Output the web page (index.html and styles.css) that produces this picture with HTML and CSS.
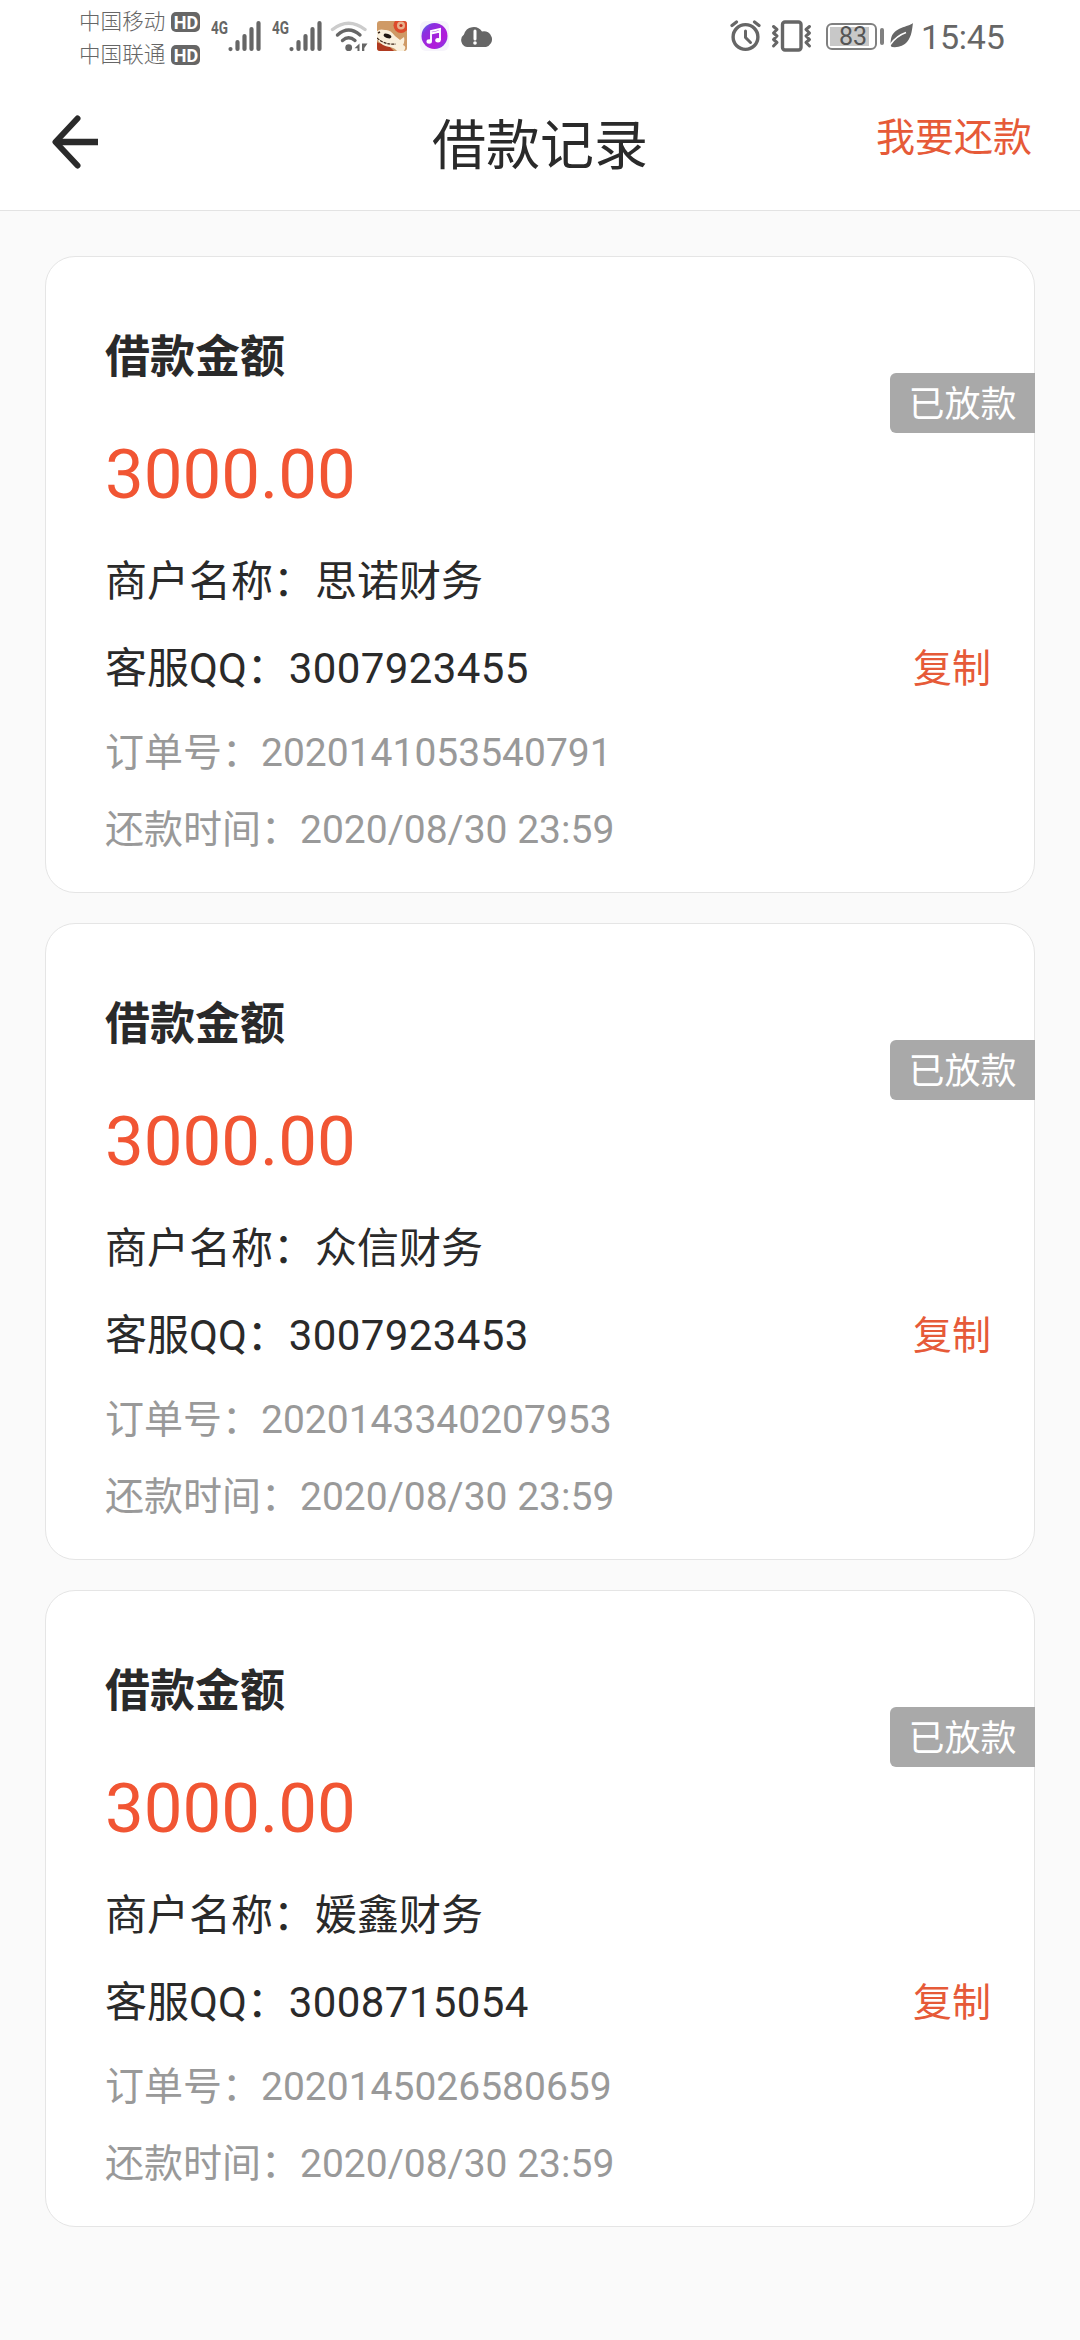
FILE: index.html
```html
<!DOCTYPE html>
<html lang="zh-CN">
<head>
    <meta charset="UTF-8">
    <meta name="viewport" content="width=device-width, initial-scale=1.0">
    <title>借款记录</title>
    <link rel="stylesheet" href="styles.css">
</head>
<body>
    <!-- Status bar -->
    <div class="status-bar">
        <div class="carriers">
            <div class="carrier">中国移动<span class="hd">HD</span></div>
            <div class="carrier">中国联通<span class="hd">HD</span></div>
        </div>
        <svg class="signal" width="50" height="36" viewBox="0 0 50 36">
            <text class="net" x="0" y="16" textLength="17" lengthAdjust="spacingAndGlyphs">4G</text>
            <path d="M19.5 31v0.1M26.5 24v7M33.5 18v13M40.5 11v20M47.5 5v26" stroke="#666" stroke-width="4.2" stroke-linecap="round"/>
        </svg>
        <svg class="signal" width="50" height="36" viewBox="0 0 50 36">
            <text class="net" x="0" y="16" textLength="17" lengthAdjust="spacingAndGlyphs">4G</text>
            <path d="M19.5 31v0.1M26.5 24v7M33.5 18v13M40.5 11v20M47.5 5v26" stroke="#666" stroke-width="4.2" stroke-linecap="round"/>
        </svg>
        <svg class="wifi" width="38" height="36" viewBox="0 0 38 36">
            <g fill="none" stroke-linecap="round" stroke-width="3.4">
                <path d="M2.5 11.5Q18.5 -1 35 11.5" stroke="#ccc"/>
                <path d="M7.5 17Q18.5 7 30 17" stroke="#666"/>
                <path d="M12.5 22.5Q18.5 17 25 22.5" stroke="#666"/>
            </g>
            <circle cx="18.7" cy="29.7" r="3.4" fill="#666"/>
            <path d="M29.5 25.5v7.5h-2v-2.8h-3l5-4.7zM32 33v-7.5h5.5l-3.200 4.500v3z" fill="#666"/>
        </svg>
        <svg class="app" width="32" height="36" viewBox="0 0 32 36">
            <defs><clipPath id="app-clip"><rect x="1" y="3" width="30" height="30" rx="3"/></clipPath></defs>
            <g clip-path="url(#app-clip)">
                <rect width="32" height="36" fill="#cf9a66"/>
                <path d="M0 35V24l14 5 6 6z" fill="#b03a20"/>
                <circle cx="25" cy="7.5" r="7.5" fill="#dd4a2c"/>
                <circle cx="25" cy="7.5" r="4" fill="#e7b08c"/>
                <circle cx="25" cy="7.5" r="1.6" fill="#c9301c"/>
                <path d="M0 15Q2 10 9 12Q14 11 19 18L24 22L28 19Q29 24 27 27Q31 28 28 33H21Q19 30 14 29Q5 28 0 20z" fill="#f9efdc"/>
                <path d="M1 20Q8 27 20 26" fill="none" stroke="#3a2417" stroke-width="1.2" stroke-dasharray="3 1"/>
                <ellipse cx="11.5" cy="18" rx="4" ry="2" fill="#1f1712" transform="rotate(18 11.5 18)"/>
                <path d="M2 15l2-1" stroke="#3a2417" stroke-width="1.4"/>
            </g>
        </svg>
        <svg class="music" width="30" height="36" viewBox="0 0 30 36">
            <defs>
                <linearGradient id="music-fill" x1="0" y1="0" x2="1" y2="1">
                    <stop offset="0" stop-color="#3b8ff0"/>
                    <stop offset="0.25" stop-color="#8b2fe0"/>
                    <stop offset="0.7" stop-color="#b31bd9"/>
                    <stop offset="1" stop-color="#6a4bea"/>
                </linearGradient>
            </defs>
            <rect x="0" y="3" width="29" height="30" rx="6" fill="#f6f4fb"/>
            <circle cx="14.5" cy="18" r="13" fill="url(#music-fill)"/>
            <path d="M11 23.5V13l9-2v11M11 15.5l9-2" fill="none" stroke="#fff" stroke-width="1.9"/>
            <ellipse cx="9.2" cy="23.5" rx="2.7" ry="2.2" fill="#fff"/>
            <ellipse cx="18" cy="22.3" rx="2.7" ry="2.2" fill="#fff"/>
        </svg>
        <svg class="cloud" width="32" height="36" viewBox="0 0 32 36">
            <path d="M7 29A7 7 0 0 1 4 16.5A10 10 0 0 1 22 13.5A8 8 0 0 1 26 29z" fill="#666"/>
            <path d="M15 13v8" stroke="#fff" stroke-width="3" stroke-linecap="round"/>
            <circle cx="15" cy="25" r="1.8" fill="#fff"/>
        </svg>
        <div class="status-right">
            <svg width="32" height="36" viewBox="0 0 32 36">
                <circle cx="15.5" cy="19" r="12.4" fill="none" stroke="#666" stroke-width="3.4"/>
                <path d="M15.5 13v6.5l5 5" fill="none" stroke="#666" stroke-width="3" stroke-linecap="round" stroke-linejoin="round"/>
                <path d="M2 7.5l4.5-3.5M29 7.5l-4.5-3.5" stroke="#666" stroke-width="3.2" stroke-linecap="round"/>
            </svg>
            <svg class="vibrate" width="42" height="36" viewBox="0 0 42 36">
                <rect x="11.5" y="4" width="18.5" height="28" rx="2.5" fill="none" stroke="#666" stroke-width="3.4"/>
                <path d="M2.5 8.5l3.5 3-3.5 3.5 3.5 3-3.5 3.5 3.5 3-3.5 3.5M38.5 8.5l-3.5 3 3.5 3.5-3.5 3 3.5 3.5-3.5 3 3.5 3.5" fill="none" stroke="#666" stroke-width="3" stroke-linecap="round" stroke-linejoin="round"/>
            </svg>
            <div class="battery"><span>83</span></div>
            <div class="battery-tip"></div>
            <svg class="leaf" width="24" height="36" viewBox="0 0 24 36">
                <path d="M23 5C19 9 3 9 1 21C0 26 1 29 2 29Q12 30 17 24C22 18 22 11 23 5z" fill="#666"/>
                <path d="M0 27Q6 18 16 14.5" fill="none" stroke="#fff" stroke-width="1.5"/>
            </svg>
            <span class="clock">15:45</span>
        </div>
    </div>

    <!-- Title bar -->
    <div class="nav">
        <svg class="back" width="50" height="56" viewBox="0 0 50 56">
            <path d="M26.5 4.500L4.500 28L26.500 51.500" fill="none" stroke="#2a2a2a" stroke-width="6" stroke-linecap="round" stroke-linejoin="round"/>
            <path d="M5 28H47" stroke="#2a2a2a" stroke-width="6.5"/>
        </svg>
        <h1>借款记录</h1>
        <a class="repay">我要还款</a>
    </div>

    <!-- Loan records -->
    <div class="list">
        <div class="card">
            <span class="badge">已放款</span>
            <h2>借款金额</h2>
            <div class="amount">3000.00</div>
            <div class="row name">商户名称：思诺财务</div>
            <div class="row qq"><span>客服QQ：<span class="num">3007923455</span></span><a class="copy">复制</a></div>
            <div class="info order">订单号：2020141053540791</div>
            <div class="info time">还款时间：2020/08/30 23:59</div>
        </div>
        <div class="card">
            <span class="badge">已放款</span>
            <h2>借款金额</h2>
            <div class="amount">3000.00</div>
            <div class="row name">商户名称：众信财务</div>
            <div class="row qq"><span>客服QQ：<span class="num">3007923453</span></span><a class="copy">复制</a></div>
            <div class="info order">订单号：2020143340207953</div>
            <div class="info time">还款时间：2020/08/30 23:59</div>
        </div>
        <div class="card">
            <span class="badge">已放款</span>
            <h2>借款金额</h2>
            <div class="amount">3000.00</div>
            <div class="row name">商户名称：媛鑫财务</div>
            <div class="row qq"><span>客服QQ：<span class="num">3008715054</span></span><a class="copy">复制</a></div>
            <div class="info order">订单号：2020145026580659</div>
            <div class="info time">还款时间：2020/08/30 23:59</div>
        </div>
    </div>
</body>
</html>
```

FILE: styles.css
```css
* {
    box-sizing: border-box;
}
body {
    margin: 0;
    min-height: 2340px;
    background-color: #fafafa;
    color: #2a2a2a;
    font-family: Roboto, "Noto Sans CJK SC", sans-serif;
}
h1, h2 {
    margin: 0;
}
svg {
    display: block;
    flex: none;
}

/* Status bar */
.status-bar {
    display: flex;
    align-items: flex-start;
    height: 72px;
    padding: 18px 76px 0 79px;
    background-color: #fff;
    color: #666;
}
.carriers {
    width: 132px;
    margin-top: -13px;
}
.carrier {
    display: flex;
    align-items: center;
    height: 33px;
    font-size: 21.6px;
    font-weight: 300;
    line-height: 33px;
    white-space: nowrap;
}
.hd {
    width: 29px;
    height: 20px;
    margin-left: 6px;
    border-radius: 5px;
    background-color: #666;
    color: #fff;
    font-size: 18px;
    font-weight: bold;
    line-height: 21px;
    text-align: center;
}
.net {
    fill: #666;
    font-size: 18px;
    font-weight: bold;
}
.signal {
    margin-right: 11px;
}
.wifi {
    margin-left: -3px;
}
.app {
    margin-left: 8px;
}
.music {
    margin-left: 12px;
}
.cloud {
    margin-left: 10px;
}
.status-right {
    display: flex;
    margin-left: auto;
}
.vibrate {
    margin-left: 9px;
}
.battery {
    width: 51px;
    height: 27px;
    margin: 5px 0 0 13px;
    padding: 2px;
    border: 2px solid #808080;
    border-radius: 6px;
}
.battery span {
    display: block;
    width: 39px;
    height: 19px;
    background-color: #c8c8c8;
    color: #555;
    font-size: 25px;
    line-height: 19px;
    text-align: right;
    padding-right: 2px;
}
.battery-tip {
    width: 4px;
    height: 17px;
    margin: 10px 6px 0 3px;
    border-radius: 2px;
    background-color: #808080;
}
.clock {
    width: 83px;
    margin-left: 7px;
    font-size: 34px;
    letter-spacing: -0.2px;
    line-height: 39px;
}

/* Title bar */
.nav {
    display: grid;
    grid-template-columns: 300px 1fr 300px;
    height: 139px;
    padding: 0 48px;
    border-bottom: 1px solid #e3e3e3;
    background-color: #fff;
}
.back {
    margin: 42px 0 0 3px;
}
.nav h1 {
    padding-top: 35px;
    font-size: 54px;
    font-weight: normal;
    line-height: 80px;
    text-align: center;
}
.repay {
    padding-top: 36px;
    font-size: 39px;
    line-height: 60px;
    text-align: right;
}
.repay, .copy {
    color: #e65a38;
}

/* Loan records */
.list {
    display: flex;
    flex-direction: column;
    gap: 30px;
    padding: 45px;
}
.card {
    position: relative;
    height: 637px;
    padding: 71px 43px 0 59px;
    border: 1px solid #e5e5e5;
    border-radius: 30px;
    background-color: #fff;
}
.badge {
    position: absolute;
    top: 116px;
    right: -1px;
    width: 145px;
    height: 60px;
    border-radius: 6px 0 0 6px;
    background-color: #a9a9a9;
    color: #fff;
    font-size: 36px;
    line-height: 64px;
    text-align: center;
}
.card h2 {
    font-size: 45px;
    font-weight: bold;
    line-height: 60px;
}
.amount {
    margin-top: 42px;
    color: #f15533;
    font-size: 69px;
    line-height: 90px;
}
.row {
    display: flex;
    justify-content: space-between;
    font-size: 42px;
    line-height: 60px;
}
.name {
    margin-top: 32px;
}
.qq {
    margin-top: 27px;
}
.num {
    letter-spacing: 0.4px;
}
.copy {
    font-size: 39px;
}
.info {
    color: #999;
    font-size: 39px;
    line-height: 60px;
}
.order {
    margin-top: 24px;
}
.time {
    margin-top: 17px;
}
```
